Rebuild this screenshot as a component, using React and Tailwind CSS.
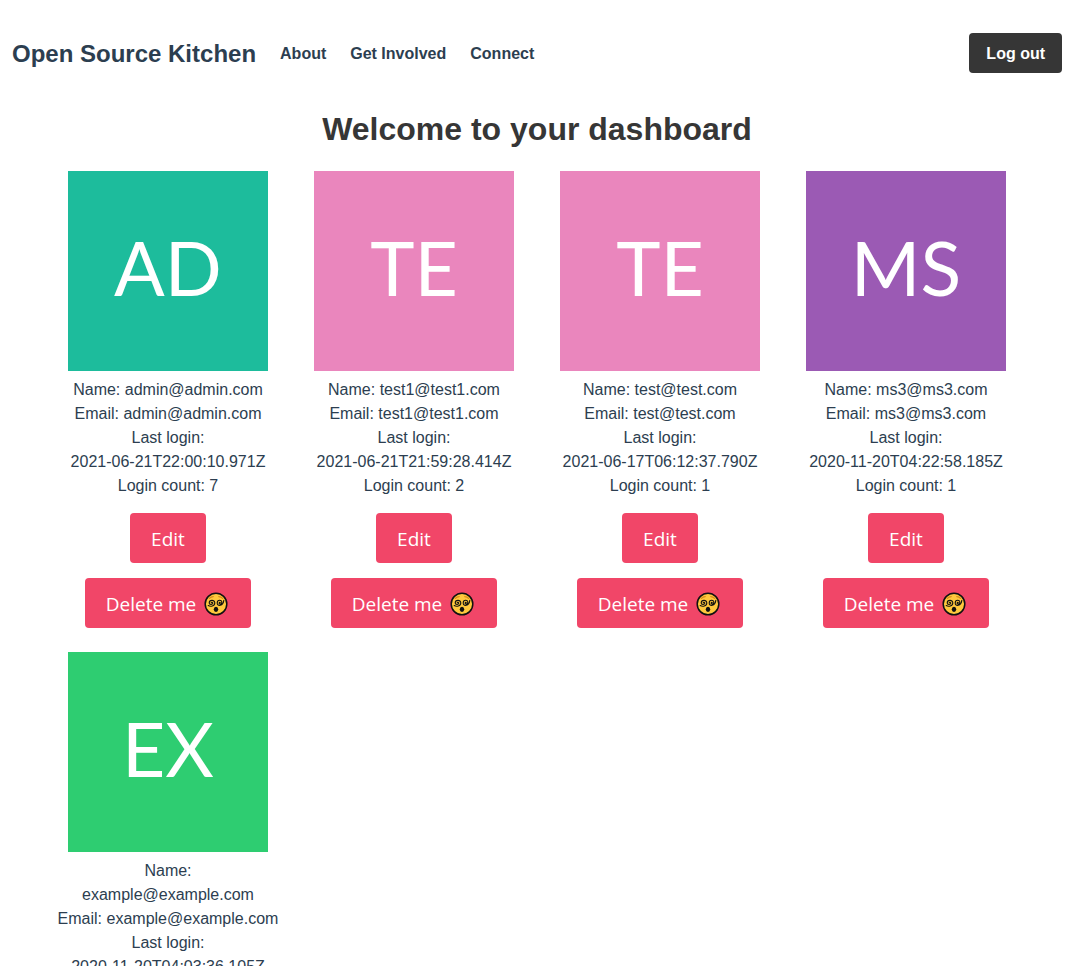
const users = [
  { initials: "AD", tile: "bg-[#1dbc9c]", name: "admin@admin.com", lastLogin: "2021-06-21T22:00:10.971Z", count: 7 },
  { initials: "TE", tile: "bg-[#ea86bd]", name: "test1@test1.com", lastLogin: "2021-06-21T21:59:28.414Z", count: 2 },
  { initials: "TE", tile: "bg-[#ea86bd]", name: "test@test.com", lastLogin: "2021-06-17T06:12:37.790Z", count: 1 },
  { initials: "MS", tile: "bg-[#9b5ab4]", name: "ms3@ms3.com", lastLogin: "2020-11-20T04:22:58.185Z", count: 1 },
  { initials: "EX", tile: "bg-[#2ecd71]", name: "example@example.com", lastLogin: "2020-11-20T04:03:36.105Z", count: 1 },
];

const links = ["About", "Get Involved", "Connect"];

function DizzyFace() {
  return (
    <svg viewBox="0 0 26 26" className="size-[26px] shrink-0" aria-hidden="true" fill="none" strokeLinecap="round">
      <circle cx="12" cy="13" r="10.8" fill="#ffc83d" stroke="#111" strokeWidth="1.5" />
      <path d="M5.4 7.4 Q7 5.6 9.2 5.6 M14.8 5.6 Q17 5.6 18.6 7.4" stroke="#d68a1c" strokeWidth="1.3" />
      <path
        d="M4.2 14.6 C6.4 15.8 10.8 15.4 10.8 12 C10.8 8.4 5.2 8.6 5.2 11.9 C5.2 14 8.8 14 8.8 12.1 C8.8 10.9 7.2 10.9 7.2 12"
        stroke="#111"
        strokeWidth="1.1"
      />
      <path
        d="M19.8 9.4 C19.2 15 13.2 16 13.2 12 C13.2 8.4 18.4 8.6 17.8 11.6 C17.4 13.8 14.9 13.6 15.2 12 C15.4 11.2 16.2 11.2 16.2 11.8"
        stroke="#111"
        strokeWidth="1.1"
      />
      <ellipse cx="12" cy="18.3" rx="2.2" ry="2.6" fill="#111" />
    </svg>
  );
}

function ActionButton({ children }) {
  return (
    <button
      type="button"
      className="flex h-[50px] items-center gap-2 rounded bg-[#f14668] px-[21px] pt-0.5 font-['Open_Sans',sans-serif] text-[19px] text-white hover:bg-[#ef2e55]"
    >
      {children}
    </button>
  );
}

function UserCard({ user }) {
  return (
    <li className="flex flex-col items-center p-3 text-center">
      <div
        className={`flex size-[200px] items-center justify-center pb-2 font-[Lato,sans-serif] text-[75px] leading-none text-white ${user.tile}`}
      >
        {user.initials}
      </div>
      <div className="mt-[7px]">
        <p>Name: {user.name}</p>
        <p>Email: {user.name}</p>
        <p>
          Last login: <time className="whitespace-nowrap" dateTime={user.lastLogin}>{user.lastLogin}</time>
        </p>
        <p>Login count: {user.count}</p>
      </div>
      <div className="mt-[15px] flex flex-col items-center gap-[15px]">
        <ActionButton>Edit</ActionButton>
        <ActionButton>
          Delete me <DizzyFace />
        </ActionButton>
      </div>
    </li>
  );
}

export default function App() {
  return (
    <div className="h-screen overflow-y-auto bg-white font-['Liberation_Sans',Arial,sans-serif] text-base text-[#2c3e50] [scrollbar-width:none]">
      <header className="flex items-center px-3 pt-[33px] font-bold">
        <a href="#home" className="pt-0.5 text-2xl">Open Source Kitchen</a>
        <nav className="ml-6 flex gap-6 pt-0.5">
          {links.map((label) => (
            <a key={label} href="#section">{label}</a>
          ))}
        </nav>
        <button type="button" className="ml-auto h-10 rounded bg-[#363636] px-[17px] pt-0.5 text-white hover:bg-[#2f2f2f]">
          Log out
        </button>
      </header>
      <main className="px-[45px] pt-9">
        <h1 className="text-center text-[32px] leading-10 font-bold text-[#363636]">Welcome to your dashboard</h1>
        <ul className="mt-2.5 grid grid-cols-4">
          {users.map((user) => (
            <UserCard key={user.name} user={user} />
          ))}
        </ul>
      </main>
    </div>
  );
}
